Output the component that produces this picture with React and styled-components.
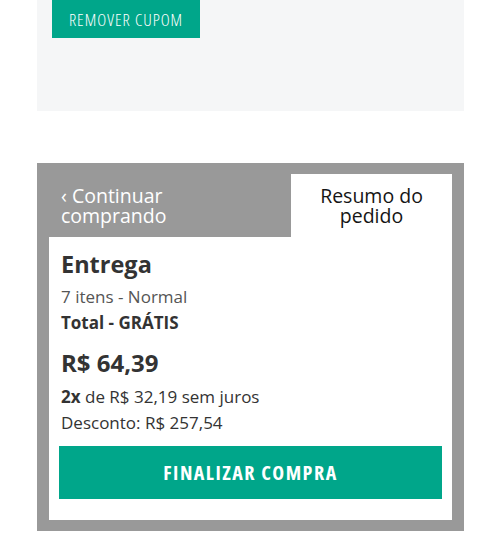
import React from "react";
import styled, { createGlobalStyle } from "styled-components";

const Global = createGlobalStyle`
  html, body { margin: 0; padding: 0; background: #ffffff; }
  body { font-family: "Open Sans", "DejaVu Sans", sans-serif; color: #333; }
  * { box-sizing: border-box; }
`;

const Page = styled.div`
  width: 500px;
  padding: 0 36px 0 37px;
  display: flex;
  flex-direction: column;
  gap: 52px;
`;

const CouponPanel = styled.section`
  background: #f5f6f7;
  height: 111px;
  padding: 0 15px;
`;

const TealButton = styled.button`
  display: flex;
  align-items: center;
  justify-content: center;
  border: none;
  margin: 0;
  background: #00a68a;
  color: #fff;
  font-family: "Open Sans", sans-serif;
  font-stretch: 75%;
  text-transform: uppercase;
  cursor: pointer;
  width: ${(p) => (p.$full ? "100%" : "148px")};
  height: ${(p) => (p.$full ? "53px" : "38px")};
  font-size: ${(p) => (p.$full ? "20px" : "17px")};
  font-weight: ${(p) => (p.$full ? 700 : 300)};
  letter-spacing: ${(p) => (p.$full ? "1.5px" : "1px")};
  padding: 0;
`;

const SummaryPanel = styled.section`
  background: #999999;
  padding: 11px 12px;
  display: flex;
  flex-direction: column;
`;

const Header = styled.div`
  display: flex;
  height: 63px;
`;

const BackLink = styled.a`
  flex: 1;
  padding: 12px 12px 0;
  color: #fff;
  font-size: 19.5px;
  line-height: 20px;
  text-decoration: none;
`;

const Tab = styled.div`
  width: 161px;
  background: #fff;
  padding-top: 12px;
  color: #151515;
  font-size: 19.5px;
  line-height: 20px;
  text-align: center;
`;

const Content = styled.div`
  background: #fff;
  padding: 12px 10px 21px;
  display: flex;
  flex-direction: column;
`;

const Line = styled.p`
  margin: ${(p) => p.$mt || 0}px 2px 0;
  font-size: ${(p) => p.$size || 17}px;
  line-height: ${(p) => p.$lh || 26}px;
  font-weight: ${(p) => (p.$bold ? 700 : 400)};
  color: ${(p) => p.$color || "#333"};
`;

const Strong = styled.b`
  font-weight: 700;
`;

const ButtonWrap = styled.div`
  margin-top: 10px;
`;

export default function App() {
  return (
    <>
      <Global />
      <Page>
        <CouponPanel>
          <TealButton>Remover cupom</TealButton>
        </CouponPanel>
        <SummaryPanel>
          <Header>
            <BackLink href="#">‹ Continuar<br />comprando</BackLink>
            <Tab>Resumo do<br />pedido</Tab>
          </Header>
          <Content>
            <Line $size={23.5} $lh={30} $bold>Entrega</Line>
            <Line $mt={5} $color="#555">7 itens - Normal</Line>
            <Line $bold>Total - GRÁTIS</Line>
            <Line $mt={11} $size={24} $lh={32} $bold>R$ 64,39</Line>
            <Line $mt={5}><Strong>2x</Strong> de R$ 32,19 sem juros</Line>
            <Line>Desconto: R$ 257,54</Line>
            <ButtonWrap>
              <TealButton $full>Finalizar compra</TealButton>
            </ButtonWrap>
          </Content>
        </SummaryPanel>
      </Page>
    </>
  );
}
